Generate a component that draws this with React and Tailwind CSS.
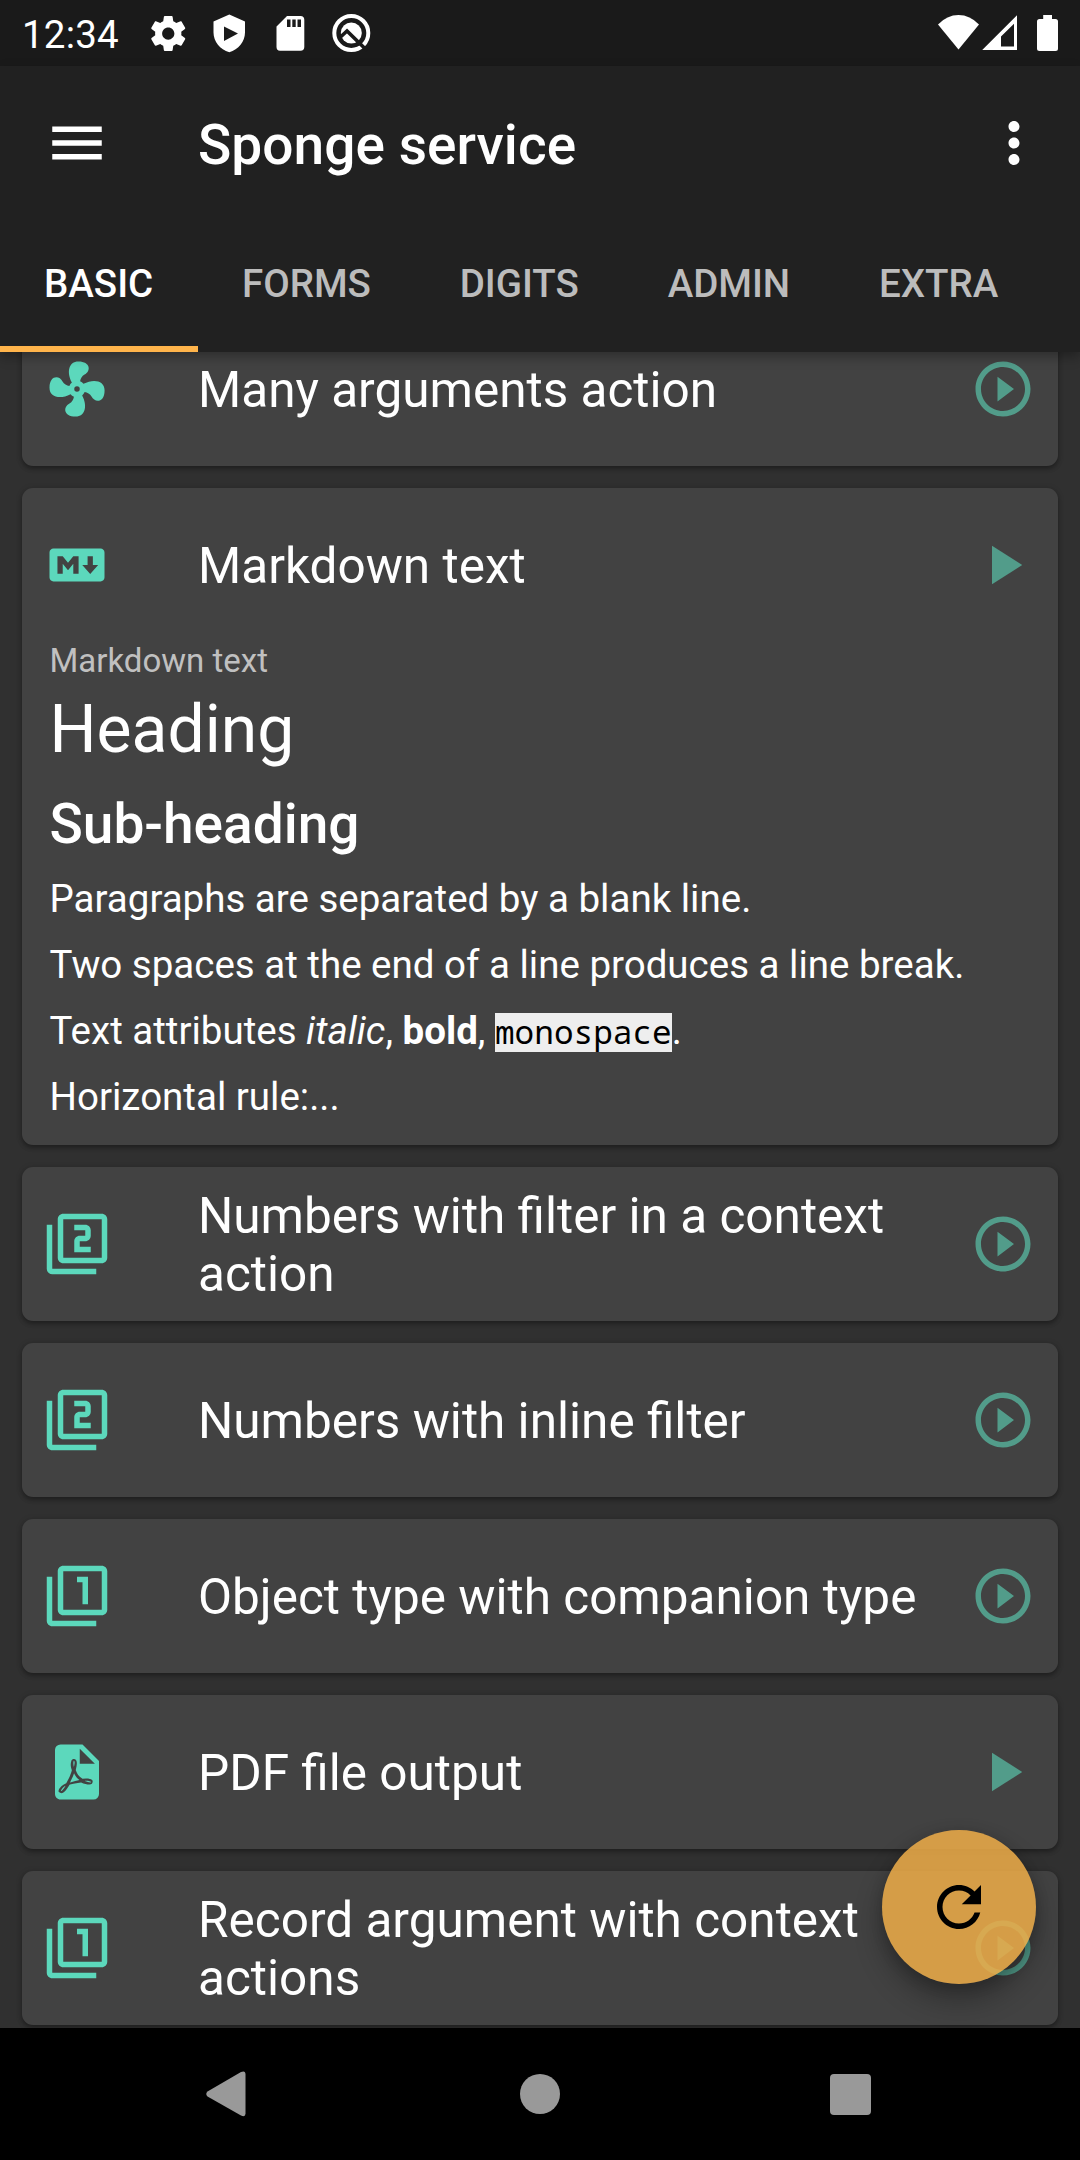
import React from "react";

const PATHS = {
  fan: "M12,11A1,1 0 0,0 11,12A1,1 0 0,0 12,13A1,1 0 0,0 13,12A1,1 0 0,0 12,11M12.5,2C17,2 17.11,5.57 14.75,6.75C13.76,7.24 13.32,8.29 13.13,9.22C13.61,9.42 14.03,9.73 14.35,10.13C18.05,8.13 22.03,8.92 22.03,12.5C22.03,17 18.46,17.1 17.28,14.73C16.78,13.74 15.72,13.3 14.79,13.11C14.59,13.59 14.28,14 13.88,14.34C15.87,18.03 15.08,22 11.5,22C7,22 6.91,18.42 9.27,17.24C10.25,16.75 10.69,15.71 10.89,14.79C10.4,14.59 9.97,14.27 9.65,13.87C5.96,15.85 2,15.07 2,11.5C2,7 5.56,6.89 6.74,9.26C7.24,10.25 8.29,10.68 9.22,10.87C9.41,10.39 9.73,9.97 10.14,9.65C8.15,5.96 8.94,2 12.5,2Z",
  markdown:
    "M20.56 18H3.44C2.65 18 2 17.37 2 16.59V7.41C2 6.63 2.65 6 3.44 6H20.56C21.35 6 22 6.63 22 7.41V16.59C22 17.37 21.35 18 20.56 18M6.81 15.19V11.53L8.73 13.88L10.65 11.53V15.19H12.58V8.81H10.65L8.73 11.16L6.81 8.81H4.89V15.19H6.81M19.69 12H17.77V8.81H15.85V12H13.92L16.81 15.28L19.69 12Z",
  filter1:
    "M3 5H1v16c0 1.1.9 2 2 2h16v-2H3V5zm11 10h2V5h-4v2h2v8zm7-14H7c-1.1 0-2 .9-2 2v14c0 1.1.9 2 2 2h14c1.1 0 2-.9 2-2V3c0-1.1-.9-2-2-2zm0 16H7V3h14v14z",
  filter2:
    "M3 5H1v16c0 1.1.9 2 2 2h16v-2H3V5zm18-4H7c-1.1 0-2 .9-2 2v14c0 1.1.9 2 2 2h14c1.1 0 2-.9 2-2V3c0-1.1-.9-2-2-2zm0 16H7V3h14v14zm-4-4h-4v-2h2c1.1 0 2-.89 2-2V7c0-1.11-.9-2-2-2h-4v2h4v2h-2c-1.1 0-2 .89-2 2v4h6v-2z",
  pdf: "M14,9H19.5L14,3.5V9M7,2H15L21,8V20A2,2 0 0,1 19,22H7C5.89,22 5,21.1 5,20V4A2,2 0 0,1 7,2M11.93,12.44C12.34,13.34 12.86,14.08 13.46,14.59L13.87,14.91C13,15.07 11.8,15.35 10.53,15.84V15.84L10.42,15.88L10.92,14.84C11.37,13.97 11.7,13.18 11.93,12.44M18.41,16.25C18.59,16.07 18.68,15.84 18.69,15.59C18.72,15.39 18.67,15.2 18.57,15.04C18.28,14.57 17.53,14.35 16.29,14.35L15,14.42L14.13,13.84C13.5,13.32 12.93,12.41 12.53,11.28L12.57,11.14C12.9,9.81 13.21,8.2 12.55,7.54C12.39,7.38 12.17,7.3 11.94,7.3H11.7C11.33,7.3 11,7.69 10.91,8.07C10.54,9.4 10.76,10.13 11.13,11.34V11.35C10.88,12.23 10.56,13.25 10.05,14.28L9.09,16.08L8.2,16.57C7,17.32 6.43,18.16 6.32,18.69C6.28,18.88 6.3,19.05 6.37,19.23L6.4,19.28L6.88,19.59L7.32,19.7C8.13,19.7 9.05,18.75 10.29,16.63L10.47,16.56C11.5,16.23 12.78,16 14.5,15.81C15.53,16.32 16.74,16.55 17.5,16.55C17.94,16.55 18.24,16.44 18.41,16.25M18,15.54L18.09,15.65C18.08,15.75 18.05,15.76 18,15.78H17.96L17.77,15.8C17.31,15.8 16.6,15.61 15.87,15.29C15.96,15.19 16,15.19 16.1,15.19C17.5,15.19 17.9,15.44 18,15.54M8.83,17C8.18,18.19 7.59,18.85 7.14,19C7.19,18.62 7.64,17.96 8.35,17.31L8.83,17M11.85,10.09C11.62,9.19 11.61,8.46 11.78,8.04L11.85,7.92L12,7.97C12.17,8.21 12.19,8.53 12.09,9.07L12.06,9.23L11.9,10.05L11.85,10.09Z",
  playCircle:
    "M10 16.5l6-4.5-6-4.5v9zM12 2C6.48 2 2 6.48 2 12s4.48 10 10 10 10-4.48 10-10S17.52 2 12 2zm0 18c-4.41 0-8-3.59-8-8s3.59-8 8-8 8 3.59 8 8-3.59 8-8 8z",
  play: "M8 5v14l11-7z",
  menu: "M3 18h18v-2H3v2zm0-5h18v-2H3v2zm0-7v2h18V6H3z",
  more: "M12 8c1.1 0 2-.9 2-2s-.9-2-2-2-2 .9-2 2 .9 2 2 2zm0 2c-1.1 0-2 .9-2 2s.9 2 2 2 2-.9 2-2-.9-2-2-2zm0 6c-1.1 0-2 .9-2 2s.9 2 2 2 2-.9 2-2-.9-2-2-2z",
  refresh:
    "M17.65 6.35C16.2 4.9 14.21 4 12 4c-4.42 0-7.99 3.58-7.99 8s3.57 8 7.99 8c3.73 0 6.84-2.55 7.73-6h-2.08c-.82 2.33-3.04 4-5.65 4-3.31 0-6-2.69-6-6s2.69-6 6-6c1.66 0 3.14.69 4.22 1.78L13 11h7V4l-2.35 2.35z",
  gear: "M19.43 12.98c.04-.32.07-.64.07-.98s-.03-.66-.07-.98l2.11-1.65c.19-.15.24-.42.12-.64l-2-3.46c-.12-.22-.39-.3-.61-.22l-2.49 1c-.52-.4-1.08-.73-1.69-.98l-.38-2.65C14.46 2.18 14.25 2 14 2h-4c-.25 0-.46.18-.49.42l-.38 2.65c-.61.25-1.17.59-1.69.98l-2.49-1c-.23-.09-.49 0-.61.22l-2 3.46c-.13.22-.07.49.12.64l2.11 1.65c-.04.32-.07.65-.07.98s.03.66.07.98l-2.11 1.65c-.19.15-.24.42-.12.64l2 3.46c.12.22.39.3.61.22l2.49-1c.52.4 1.08.73 1.69.98l.38 2.65c.03.24.24.42.49.42h4c.25 0 .46-.18.49-.42l.38-2.65c.61-.25 1.17-.59 1.69-.98l2.49 1c.23.09.49 0 .61-.22l2-3.46c.12-.22.07-.49-.12-.64l-2.11-1.65zM12 15.5c-1.93 0-3.5-1.57-3.5-3.5s1.57-3.5 3.5-3.5 3.5 1.57 3.5 3.5-1.57 3.5-3.5 3.5z",
};

function Icon({ name, className = "size-[66px]", shift }) {
  return (
    <svg viewBox="0 0 24 24" className={`shrink-0 ${className}`} fill="currentColor" fillRule="evenodd">
      <path d={PATHS[name]} transform={shift ? `translate(${shift} 0)` : undefined} />
    </svg>
  );
}

function StatusBar() {
  return (
    <div className="flex h-[66px] shrink-0 items-center bg-[#1a1a1a] pl-[22px] pr-[22px]">
      <span className="w-[124px] text-[38.5px] leading-none tracking-[0.2px] pt-[4px]">12:34</span>
      <svg className="h-[66px] w-[230px]" viewBox="146 0 230 66" fill="#fff" fillRule="evenodd">
        <path transform="translate(147.25 12.5) scale(1.75)" d={PATHS.gear} fillRule="nonzero" />
        <path d="M229.3 14.5L245 21.5V32.5C245 41.5 238.500 49.500 229.300 52.300C220 49.500 213.500 41.500 213.500 32.500V21.500ZM224 26.500V41L238 33.500Z" />
        <path d="M287 16H300.500Q304.300 16 304.300 19.800V47Q304.300 50.700 300.500 50.700H280Q276.500 50.700 276.500 47V26.500ZM287 19.500V27H290.500V19.500ZM292.300 19.500V27H295.700V19.500ZM297.500 19.500V27H301V19.500Z" />
        <circle cx="351.300" cy="33" r="17" fill="none" stroke="#fff" strokeWidth="4" />
        <circle cx="351.300" cy="33" r="10.500" />
        <path d="M340.500 37L347 31L367 50.500" fill="none" stroke="#1a1a1a" strokeWidth="3.600" />
      </svg>
      <svg className="ml-auto h-[66px] w-[122px]" viewBox="936 0 122 66" fill="#fff" fillRule="evenodd">
        <path d="M938 24.500Q947 15 958.500 15Q970 15 979 24.500L958.500 49.500Z" />
        <path d="M1017 15.300V50H982.200ZM1014 23.800L1001 36.500V46.500H1014Z" />
        <path d="M1043.200 15H1052V19H1055.500Q1058 19 1058 21.500V48.500Q1058 51 1055.500 51H1039.500Q1037 51 1037 48.500V21.500Q1037 19 1039.500 19H1043.200Z" />
      </svg>
    </div>
  );
}

const TABS = ["BASIC", "FORMS", "DIGITS", "ADMIN", "EXTRA"];

function Header() {
  return (
    <header className="relative z-10 shrink-0 bg-[#212121] shadow-[0_5px_11px_rgba(0,0,0,0.3)]">
      <div className="flex h-[154px] items-center pl-11 pr-[33px]">
        <Icon name="menu" />
        <h1 className="ml-[88px] flex-1 text-[55px] font-medium leading-none tracking-[0.05px] pt-[5px]">Sponge service</h1>
        <Icon name="more" />
      </div>
      <nav className="flex h-[132px]">
        {TABS.map((tab, i) => (
          <div
            key={tab}
            className={`flex items-center border-b-[6px] pt-[2px] pr-[44.8px] pl-11 text-[38.5px] font-medium ${
              i === 0 ? "border-[#ffb44b] text-white" : "border-transparent text-[#bcbcbc]"
            }`}
          >
            {tab}
          </div>
        ))}
      </nav>
    </header>
  );
}

function Row({ icon, title, direct, shift }) {
  return (
    <div className="flex h-[154px] items-center pl-[22px] pr-[22px]">
      <Icon name={icon} shift={shift} className="size-[66px] text-[#5cd8bc]" />
      <h2 className="ml-[88px] w-[740px] pt-[2px] text-[49.5px] leading-[58px]">{title}</h2>
      <Icon name={direct ? "play" : "playCircle"} className="ml-auto size-[66px] text-[#529c8a]" />
    </div>
  );
}

function Card({ children, ...row }) {
  return (
    <section className="shrink-0 rounded-[11px] bg-[#424242] shadow-[0_3px_4px_rgba(0,0,0,0.25),0_1px_6px_rgba(0,0,0,0.18)]">
      <Row {...row} />
      {children}
    </section>
  );
}

function MarkdownPreview() {
  return (
    <div className="flex h-[503px] flex-col px-[27.5px] text-[38.5px] leading-[44px]">
      <p className="text-[33px] leading-[38px] text-[#c0c0c0]">Markdown text</p>
      <h3 className="mt-[11px] text-[66px] leading-[78px]">Heading</h3>
      <h4 className="mt-[23px] text-[55px] font-medium leading-[64px]">Sub-heading</h4>
      <p className="mt-[21px]">Paragraphs are separated by a blank line.</p>
      <p className="mt-[22px]">Two spaces at the end of a line produces a line break.</p>
      <p className="mt-[22px] h-11">
        Text attributes <em>italic</em>, <strong className="font-bold">bold</strong>,{" "}
        <code className="bg-[linear-gradient(#eeeeee,#eeeeee)] bg-[length:100%_39px] bg-[position:0_4px] bg-no-repeat font-['Droid_Sans_Mono','Noto_Sans_Mono','DejaVu_Sans_Mono',monospace] text-[32.725px] text-black">
          monospace
        </code>
        .
      </p>
      <p className="mt-[22px]">Horizontal rule:...</p>
    </div>
  );
}

function NavBar() {
  return (
    <div className="flex h-[132px] shrink-0 items-center bg-black pl-[206px] text-[#999999]">
      <svg className="h-[46px] w-10" viewBox="0 0 40 46" fill="currentColor">
        <path d="M1.500 20.500L35 1Q39.500 -1 39.500 3.500V42.500Q39.500 46.500 35 44.500L1.500 25.500Q-1 23 1.500 20.500Z" />
      </svg>
      <div className="ml-[274px] size-10 rounded-full bg-[#999999]" />
      <div className="ml-[270px] size-[41px] rounded-[4px] bg-[#999999]" />
    </div>
  );
}

export default function App() {
  return (
    <div className="relative flex h-[2160px] w-[1080px] flex-col overflow-hidden bg-[#303030] font-['Roboto',sans-serif] text-white">
      <StatusBar />
      <Header />
      <main className="flex min-h-0 flex-1 flex-col overflow-hidden px-[22px]">
        <div className="-mt-10 flex flex-col gap-[22px]">
          <Card icon="fan" title="Many arguments action" />
          <Card icon="markdown" title="Markdown text" direct>
            <MarkdownPreview />
          </Card>
          <Card icon="filter2" title="Numbers with filter in a context action" />
          <Card icon="filter2" title="Numbers with inline filter" />
          <Card icon="filter1" title="Object type with companion type" />
          <Card icon="pdf" title="PDF file output" direct shift={-1} />
          <Card icon="filter1" title="Record argument with context actions" />
        </div>
      </main>
      <NavBar />
      <button className="absolute right-11 bottom-[176px] flex size-[154px] items-center justify-center rounded-full bg-[rgba(236,171,72,0.87)] text-black shadow-[0_16px_28px_rgba(0,0,0,0.3),0_3px_14px_rgba(0,0,0,0.16)]">
        <Icon name="refresh" />
      </button>
    </div>
  );
}
